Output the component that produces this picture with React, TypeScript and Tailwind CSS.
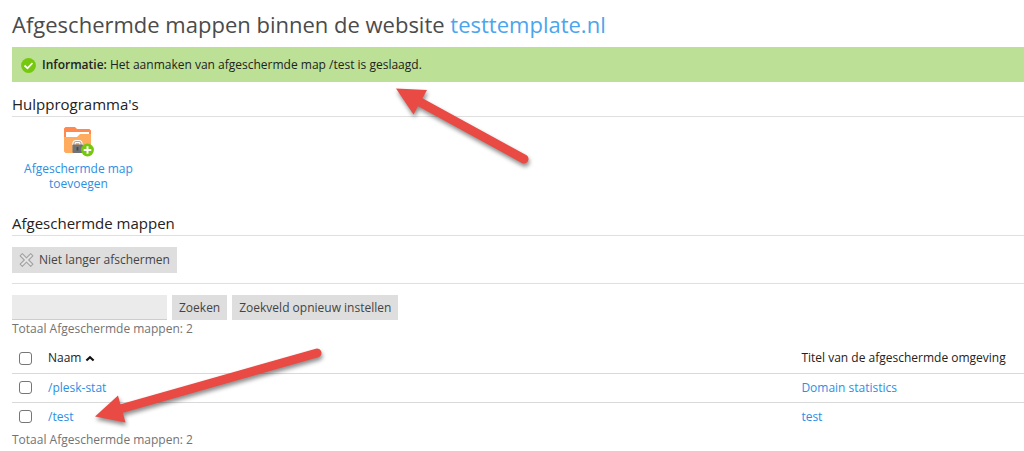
import { useState } from "react";

type Folder = {
  name: string;
  title: string;
};

const folders: Folder[] = [
  { name: "/plesk-stat", title: "Domain statistics" },
  { name: "/test", title: "test" },
];

const CheckIcon = () => (
  <svg className="size-4 shrink-0" viewBox="0 0 16 16" aria-hidden="true">
    <circle cx="8.500" cy="8.500" r="7.400" fill="#76c80e" />
    <path
      d="M4.500 8.500 7.500 11.300 12.500 6"
      fill="none"
      stroke="#fff"
      strokeWidth="1.800"
    />
  </svg>
);

const LockedFolderIcon = () => (
  <svg className="size-8" viewBox="2 0 32 32" aria-hidden="true">
    <path d="M3 3.500 4.500 2H14l2 2h12.500L30 5.500V13H3z" fill="#ff8a50" />
    <path d="M5 7h23v7H5z" fill="#fff" />
    <path d="M3 12h13l3-3h11v17.500L28.500 28h-24L3 26.500z" fill="#ffac5f" />
    <path
      d="M13 20v-1.500q0-2 2-2h3q2 0 2 2V20"
      fill="none"
      stroke="#fff"
      strokeWidth="3.200"
    />
    <path
      d="M13 20v-1.500q0-2 2-2h3q2 0 2 2V20"
      fill="none"
      stroke="#b0a8a0"
      strokeWidth="1.200"
    />
    <rect x="11.500" y="19.500" width="10.500" height="8.500" rx="1" fill="#6f7479" />
    <path d="M15.600 22h1.800v3.500h-1.800z" fill="#45494d" />
    <circle cx="26.500" cy="25" r="6.400" fill="#76c80e" />
    <path d="M26.500 21.200v7.600M22.700 25h7.600" stroke="#fff" strokeWidth="2" />
  </svg>
);

const CrossIcon = () => (
  <svg className="size-4" viewBox="0 0 16 16" aria-hidden="true">
    <path
      d="M3.300 1.600 7.500 5.800l4.200-4.200 2.200 2.200L9.700 8l4.200 4.200-2.200 2.200-4.200-4.200-4.200 4.200-2.200-2.200L5.300 8 1.100 3.800z"
      fill="#e4e4e4"
      stroke="#a3a3a3"
      strokeWidth="1.100"
      strokeLinejoin="round"
    />
  </svg>
);

const SortIcon = () => (
  <svg className="h-2 w-2.5" viewBox="0 0 10 8" aria-hidden="true">
    <path
      d="M1.400 6.500 5 3.300 8.600 6.500"
      fill="none"
      stroke="#111"
      strokeWidth="2.200"
    />
  </svg>
);

// red pointers that lie over the page
const Arrows = () => (
  <svg
    className="pointer-events-none absolute top-0 left-0 h-[451px] w-[1024px] drop-shadow-[1px_3px_2px_rgba(0,0,0,0.45)]"
    viewBox="0 0 1024 451"
    aria-hidden="true"
  >
    <g fill="#e94b44" stroke="#e94b44">
      <path d="M396 88.500 427 90 413.500 114.500z" stroke="none" />
      <path d="M418 101 524 159" strokeWidth="9" strokeLinecap="round" />
      <path d="M95 416.500 118 395.500 125.500 422.500z" stroke="none" />
      <path d="M120 409 317 353" strokeWidth="9" strokeLinecap="round" />
    </g>
  </svg>
);

const SectionTitle = ({ children }: { children: string }) => (
  <h2 className="border-b border-[#dfdfdf] text-[15px] leading-6 text-[#222]">
    {children}
  </h2>
);

const Total = () => (
  <p className="pt-px leading-4 text-[#737373]">
    Totaal Afgeschermde mappen: {folders.length}
  </p>
);

const App = () => {
  const [search, setSearch] = useState("");
  const [selected, setSelected] = useState<string[]>([]);

  const toggle = (name: string) => {
    setSelected(
      selected.includes(name)
        ? selected.filter((n) => n !== name)
        : [...selected, name]
    );
  };

  const toggleAll = () => {
    setSelected(
      selected.length === folders.length ? [] : folders.map((f) => f.name)
    );
  };

  const button = "bg-[#dedede] px-[7px] text-[#444]";
  const checkbox =
    "block size-[13px] appearance-none rounded-[3px] border border-[#767676] bg-white checked:bg-[#2a8fe5]";
  const link = "text-[#2a8fe5]";

  return (
    <div className="relative overflow-hidden bg-white pt-2 pl-3 font-['Open_Sans',sans-serif] text-[12px]">
      <h1 className="text-[22px] leading-8 text-[#4b4b4b]">
        Afgeschermde mappen binnen de website{" "}
        <a href="#" className="text-[#4aa5ee]">
          testtemplate.nl
        </a>
      </h1>

      <div className="mt-[7px] flex h-[35px] items-center gap-1.5 bg-[#bce095] pl-2 text-[#222]">
        <CheckIcon />
        <p>
          <b className="font-semibold">Informatie:</b> Het aanmaken van
          afgeschermde map /test is geslaagd.
        </p>
      </div>

      <section className="mt-[10px]">
        <SectionTitle>Hulpprogramma's</SectionTitle>
        <a
          href="#"
          className={`mt-2 flex w-[133px] flex-col items-center text-center leading-[15px] ${link}`}
        >
          <LockedFolderIcon />
          <span className="mt-1">
            Afgeschermde map
            <br />
            toevoegen
          </span>
        </a>
      </section>

      <section className="mt-5">
        <SectionTitle>Afgeschermde mappen</SectionTitle>
        <div className="border-b border-[#dfdfdf] pt-[11px] pb-[10px]">
          <button className={`flex h-[26px] items-center gap-1 ${button}`}>
            <CrossIcon />
            Niet langer afschermen
          </button>
        </div>

        <form
          className="mt-[11px] flex gap-[5px]"
          onSubmit={(e) => e.preventDefault()}
        >
          <input
            className="h-[25px] w-[155px] border-b border-[#c8ced3] bg-[#ebebeb] px-2 outline-none"
            type="text"
            aria-label="Zoeken"
            value={search}
            onChange={(e) => setSearch(e.target.value)}
          />
          <button className={`h-[25px] ${button}`} type="submit">
            Zoeken
          </button>
          <button
            className={`h-[25px] ${button}`}
            type="button"
            onClick={() => setSearch("")}
          >
            Zoekveld opnieuw instellen
          </button>
        </form>
        <Total />

        <table className="mt-[7px] w-full table-fixed border-collapse text-left">
          <thead>
            <tr className="h-[29px] border-b border-[#d9d9d9] text-[#222]">
              <th className="w-9 pl-[7px]">
                <input
                  className={checkbox}
                  type="checkbox"
                  aria-label="Alles selecteren"
                  checked={selected.length === folders.length}
                  onChange={toggleAll}
                />
              </th>
              <th className="font-normal">
                <span className="flex items-center gap-1">
                  Naam <SortIcon />
                </span>
              </th>
              <th className="w-[22%] font-normal">
                Titel van de afgeschermde omgeving
              </th>
            </tr>
          </thead>
          <tbody>
            {folders.map((folder) => (
              <tr
                key={folder.name}
                className="h-[29px] border-b border-[#d9d9d9] last:border-b-0"
              >
                <td className="pl-[7px]">
                  <input
                    className={checkbox}
                    type="checkbox"
                    aria-label={folder.name}
                    checked={selected.includes(folder.name)}
                    onChange={() => toggle(folder.name)}
                  />
                </td>
                <td>
                  <a href="#" className={link}>
                    {folder.name}
                  </a>
                </td>
                <td>
                  <a href="#" className={link}>
                    {folder.title}
                  </a>
                </td>
              </tr>
            ))}
          </tbody>
        </table>
        <Total />
      </section>

      <Arrows />
    </div>
  );
};

export default App;
